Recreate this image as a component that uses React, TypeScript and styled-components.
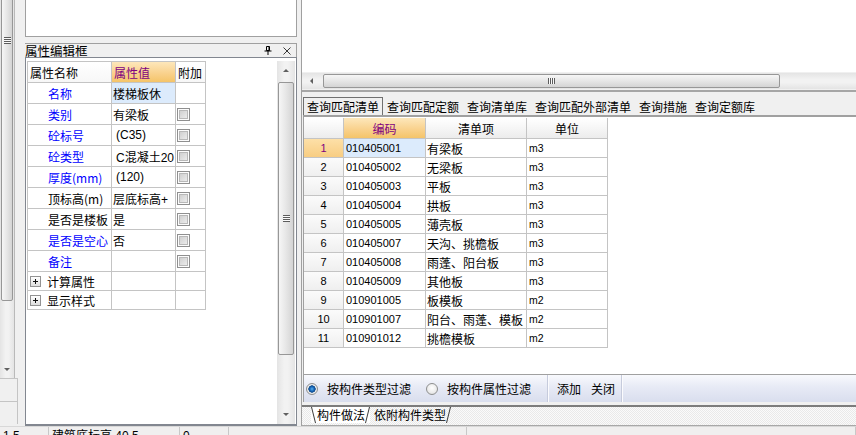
import React from 'react';
import styled, { createGlobalStyle } from 'styled-components';

const GlobalStyle = createGlobalStyle`
  html, body { margin: 0; padding: 0; background: #f0f0f0; }
  body {
    font-family: "Liberation Sans", "Noto Sans CJK SC", sans-serif;
    font-size: 12px;
    color: #000;
  }
  * { box-sizing: border-box; }
`;

const Frame = styled.div`
  width: 856px;
  height: 435px;
  overflow: hidden;
  display: flex;
  flex-direction: column;
  background: #f0f0f0;
`;

const Main = styled.div`
  height: 426px;
  flex: none;
  display: flex;
`;

/* ---------- scrollbars ---------- */

const VBar = styled.div<{ $w: number }>`
  width: ${(p) => p.$w}px;
  flex: none;
  display: flex;
  flex-direction: column;
  overflow: hidden;
  background: linear-gradient(to right, #e4e4e4, #f2f2f2 40%, #f2f2f2 60%, #e4e4e4);
`;

const StripScroll = styled(VBar)`
  height: 378px;
  border-right: 1px solid #b9b9b9;
`;

const HBar = styled.div`
  height: 16px;
  flex: none;
  display: flex;
  align-items: center;
  overflow: hidden;
  background: linear-gradient(to bottom, #e4e4e4, #f2f2f2 40%, #f2f2f2 60%, #e4e4e4);
`;

const VArrowCell = styled.div<{ $h: number }>`
  flex: none;
  height: ${(p) => p.$h}px;
  display: flex;
  align-items: center;
  justify-content: center;
`;

const HArrowCell = styled.div`
  flex: none;
  width: 19px;
  height: 16px;
  display: flex;
  align-items: center;
  justify-content: center;
`;

const Arrow = styled.span<{ $dir: 'up' | 'down' | 'left' }>`
  width: 0;
  height: 0;
  border-style: solid;
  border-color: transparent;
  ${(p) =>
    p.$dir === 'up'
      ? 'border-width: 0 3px 3px 3px; border-bottom-color: #606060;'
      : p.$dir === 'down'
      ? 'border-width: 3px 3px 0 3px; border-top-color: #606060;'
      : 'border-width: 3px 3px 3px 0; border-right-color: #606060;'}
`;

const VThumb = styled.div<{ $top: number; $h: number }>`
  flex: none;
  margin: ${(p) => p.$top}px 1px 0;
  height: ${(p) => p.$h}px;
  border: 1px solid #979797;
  border-radius: 2px;
  background: linear-gradient(to right, #f6f6f6, #e6e6e6 50%, #d4d4d4);
  display: flex;
  align-items: center;
  justify-content: center;
`;

const HThumb = styled.div<{ $w: number }>`
  flex: none;
  margin-left: 2px;
  width: ${(p) => p.$w}px;
  height: 14px;
  border: 1px solid #979797;
  border-radius: 2px;
  background: linear-gradient(to bottom, #f6f6f6, #e6e6e6 50%, #d4d4d4);
  display: flex;
  align-items: center;
  justify-content: center;
`;

const VGrip = styled.span`
  width: 7px;
  height: 7px;
  background: repeating-linear-gradient(to bottom, #5c5c5c 0 1px, #fafafa 1px 2px);
`;

const HGrip = styled.span`
  width: 7px;
  height: 6px;
  background: repeating-linear-gradient(to right, #5c5c5c 0 1px, #fafafa 1px 2px);
`;

const Track = styled.div`
  flex: 1;
`;

/* ---------- far left strip ---------- */

const Strip = styled.div`
  width: 18px;
  flex: none;
  display: flex;
  flex-direction: column;
`;

const StripBox = styled.div`
  height: 23px;
  flex: none;
  border-top: 1px solid #c4c4c4;
  border-right: 1px solid #c4c4c4;
`;

/* ---------- left property panel ---------- */

const LeftPanel = styled.div`
  width: 279px;
  flex: none;
  padding-left: 7px;
  display: flex;
  flex-direction: column;
`;

const TopBox = styled.div`
  height: 37px;
  flex: none;
  background: #fff;
  border: 1px solid #a0a0a0;
  border-top: none;
`;

const TitleBar = styled.div`
  margin-top: 6px;
  height: 14px;
  flex: none;
  display: flex;
  align-items: center;
  border-top: 1px solid #a0a0a0;
  border-right: 1px solid #a0a0a0;
  padding-right: 5px;
`;

const Title = styled.span`
  flex: 1;
  font-family: "Noto Sans CJK SC", sans-serif;
  font-size: 12.5px;
  line-height: 13px;
`;

const TitleIcons = styled.div`
  display: flex;
  align-items: center;
  gap: 11px;
`;

const Pane = styled.div`
  flex: 1;
  display: flex;
  background: #fff;
  border: 1px solid #828790;
  border-bottom-width: 2px;
  padding-top: 3px;
`;

const PropWrap = styled.div`
  flex: 1;
  padding-left: 1px;
`;

const PropGrid = styled.div`
  display: grid;
  grid-template-columns: 84px 64px 30px;
  width: 179px;
  border-top: 1px solid #c4c4c4;
  border-left: 1px solid #c4c4c4;
`;

const PCell = styled.div<{ $h: number }>`
  height: ${(p) => p.$h}px;
  display: flex;
  align-items: center;
  white-space: nowrap;
  overflow: hidden;
  border-right: 1px solid #c4c4c4;
  border-bottom: 1px solid #c4c4c4;
  font-family: "Noto Sans CJK SC", sans-serif;
  font-size: 12px;
`;

const PHead = styled(PCell)<{ $active?: boolean }>`
  padding-left: 2px;
  color: ${(p) => (p.$active ? '#800080' : '#000')};
  background: ${(p) =>
    p.$active
      ? 'linear-gradient(to bottom, #fde7bb, #f9d28e 55%, #f5c469)'
      : 'linear-gradient(to bottom, #ffffff, #f7f7f7)'};
`;

const PName = styled(PCell)<{ $blue?: boolean }>`
  padding-left: 20px;
  color: ${(p) => (p.$blue ? '#0000ff' : '#000')};
`;

const PGroup = styled(PCell)`
  padding-left: 2px;
  gap: 6px;
`;

const PValue = styled(PCell)<{ $sel?: boolean; $indent?: boolean }>`
  padding-left: ${(p) => (p.$indent ? 4 : 1)}px;
  background: ${(p) => (p.$sel ? '#dcebfc' : '#fff')};
  font-family: "Liberation Sans", "Noto Sans CJK SC", sans-serif;
`;

const PExtra = styled(PCell)`
  padding-left: 1px;
`;

const Check = styled.span`
  width: 13px;
  height: 13px;
  border: 1px solid #8f8f8f;
  background: linear-gradient(135deg, #c8c8c8, #f3f3f3);
  box-shadow: inset 0 0 0 1px #fcfcfc, inset 0 0 0 2px #b8b8b8;
`;

const PlusBox = styled.span`
  width: 11px;
  height: 11px;
  flex: none;
  border: 1px solid #939393;
  background:
    linear-gradient(#111, #111) center / 5px 1px no-repeat,
    linear-gradient(#111, #111) center / 1px 5px no-repeat,
    linear-gradient(to bottom, #ffffff, #dedede);
`;

/* ---------- splitter & right side ---------- */

const Splitter = styled.div`
  width: 4px;
  flex: none;
`;

const Right = styled.div`
  flex: 1;
  min-width: 0;
  display: flex;
  flex-direction: column;
  border-left: 1px solid #a0a0a0;
`;

const ViewBox = styled.div`
  height: 92px;
  flex: none;
  display: flex;
  flex-direction: column;
  border-bottom: 2px solid #a6a6a6;
`;

const TopView = styled.div`
  height: 72px;
  flex: none;
  background: #fff;
`;

const HBarSpaced = styled(HBar)`
  margin-top: 1px;
`;

const TabStrip = styled.div`
  height: 23px;
  flex: none;
  display: flex;
  align-items: flex-end;
  padding-left: 1px;
`;

const QueryTab = styled.span<{ $active?: boolean }>`
  height: 18px;
  padding: 0 3px;
  border: 1px solid ${(p) => (p.$active ? '#707070' : 'transparent')};
  border-bottom: none;
  font-family: "Noto Sans CJK SC", sans-serif;
  font-size: 12px;
  line-height: 17px;
  white-space: nowrap;
`;

const LowerBox = styled.div`
  margin-left: 1px;
  border-left: 1px solid #a0a0a0;
  display: flex;
  flex-direction: column;
`;

const GridArea = styled.div`
  height: 260px;
  flex: none;
  background: #fff;
  border-top: 2px solid #a0a0a0;
  border-bottom: 1px solid #a0a0a0;
  padding-top: 1px;
`;

const DataGrid = styled.div`
  display: grid;
  grid-template-columns: 40px 82px 101px 81px;
  width: 304px;
`;

const DCell = styled.div<{ $h: number }>`
  height: ${(p) => p.$h}px;
  display: flex;
  align-items: center;
  white-space: nowrap;
  overflow: hidden;
  border-right: 1px solid #c4c4c4;
  border-bottom: 1px solid #c4c4c4;
  font-family: "Noto Sans CJK SC", sans-serif;
  font-size: 12px;
`;

const DHead = styled(DCell)<{ $active?: boolean }>`
  justify-content: center;
  color: ${(p) => (p.$active ? '#800080' : '#000')};
  background: ${(p) =>
    p.$active
      ? 'linear-gradient(to bottom, #fde7bb, #f9d28e 55%, #f5c469)'
      : 'linear-gradient(to bottom, #ffffff, #f4f4f4 60%, #ececec)'};
`;

const RowNum = styled(DCell)<{ $active?: boolean }>`
  justify-content: center;
  font-family: "Liberation Sans", sans-serif;
  font-size: 11px;
  color: ${(p) => (p.$active ? '#800080' : '#000')};
  background: ${(p) =>
    p.$active
      ? 'linear-gradient(to bottom, #fde0a8, #f8cd82)'
      : 'linear-gradient(to bottom, #fbfbfb, #efefef)'};
`;

const CodeCell = styled(DCell)<{ $sel?: boolean }>`
  padding-left: 2px;
  font-family: "Liberation Sans", sans-serif;
  font-size: 11px;
  background: ${(p) => (p.$sel ? '#dcebfc' : '#fff')};
`;

const NameCell = styled(DCell)`
  padding-left: 1px;
`;

const UnitCell = styled(DCell)`
  padding-left: 2px;
  font-family: "Liberation Sans", sans-serif;
  font-size: 10.5px;
`;

/* ---------- filter toolbar ---------- */

const Toolbar = styled.div`
  height: 27px;
  flex: none;
  display: flex;
  align-items: center;
  background: linear-gradient(to bottom, #f8f9fd, #e7eaf5 45%, #d9deee);
  font-family: "Noto Sans CJK SC", sans-serif;
  font-size: 12px;
`;

const RadioItem = styled.label<{ $gap: number }>`
  display: flex;
  align-items: center;
  gap: 9px;
  margin-left: ${(p) => p.$gap}px;
  white-space: nowrap;
`;

const Radio = styled.span<{ $on?: boolean }>`
  width: 12px;
  height: 12px;
  flex: none;
  border-radius: 50%;
  border: 1px solid #8e8f8f;
  background: ${(p) =>
    p.$on
      ? 'radial-gradient(circle, #5eb3ef 0, #1a6bbd 2px, #0c4687 3.4px, #f0f0f0 3.9px, #dcdcdc 100%)'
      : 'radial-gradient(circle at 50% 40%, #ffffff 0, #ebebeb 60%, #d2d2d2 100%)'};
`;

const ToolSep = styled.span<{ $gap: number }>`
  align-self: stretch;
  width: 2px;
  flex: none;
  margin-left: ${(p) => p.$gap}px;
  border-left: 1px solid #c6cbdc;
  border-right: 1px solid #fbfbfd;
`;

const ToolBtn = styled.span<{ $gap: number }>`
  margin-left: ${(p) => p.$gap}px;
  white-space: nowrap;
`;

/* ---------- bottom tabs ---------- */

const BottomTabs = styled.div`
  margin-top: 3px;
  height: 21px;
  flex: none;
  display: flex;
  align-items: flex-start;
  padding-left: 9px;
  border-top: 2px solid #7c7c7c;
  border-bottom: 1px solid #a8a8a8;
  background: repeating-conic-gradient(#e9e9e9 0 25%, #fafafa 0 50%) 0 0 / 2px 2px;
`;

const BottomTab = styled.span<{ $active?: boolean; $left: number }>`
  position: relative;
  height: 16px;
  padding: 0 5px 0 ${(p) => p.$left}px;
  font-family: "Noto Sans CJK SC", sans-serif;
  font-size: 12px;
  line-height: 16px;
  white-space: nowrap;
  background: ${(p) => (p.$active ? '#fff' : 'transparent')};

  &::before {
    content: '';
    display: ${(p) => (p.$active ? 'block' : 'none')};
    position: absolute;
    top: 0;
    bottom: 0;
    left: 2px;
    width: 1px;
    background: #3c3c3c;
    transform: skewX(14deg);
  }

  &::after {
    content: '';
    position: absolute;
    top: 0;
    bottom: 0;
    right: 2px;
    width: 1px;
    background: #3c3c3c;
    transform: skewX(-14deg);
  }
`;

/* ---------- status bar ---------- */

const StatusBar = styled.div`
  flex: none;
  height: 20px;
  display: flex;
  border-top: 1px solid #d8d8d8;
  background: #f0efef;
`;

const StatusCell = styled.div<{ $w?: number }>`
  ${(p) => (p.$w ? `width: ${p.$w}px; flex: none;` : 'flex: 1;')}
  border-right: 1px solid #c8c8c8;
  padding: 2px 0 0 3px;
  font-family: "Liberation Sans", "Noto Sans CJK SC", sans-serif;
  font-size: 12px;
  line-height: 14px;
  white-space: nowrap;
`;

/* ---------- data ---------- */

type PropRow = {
  name: string;
  blue: boolean;
  value: string;
  indent?: boolean;
  sel?: boolean;
  check: boolean;
};

const propRows: PropRow[] = [
  { name: '名称', blue: true, value: '楼梯板休', sel: true, check: false },
  { name: '类别', blue: true, value: '有梁板', check: true },
  { name: '砼标号', blue: true, value: '(C35)', indent: true, check: true },
  { name: '砼类型', blue: true, value: 'C混凝土20', indent: true, check: true },
  { name: '厚度(mm)', blue: true, value: '(120)', indent: true, check: true },
  { name: '顶标高(m)', blue: false, value: '层底标高+', check: true },
  { name: '是否是楼板', blue: false, value: '是', check: true },
  { name: '是否是空心', blue: true, value: '否', check: true },
  { name: '备注', blue: true, value: '', check: true },
];

const groups = ['计算属性', '显示样式'];

const listRows: [string, string, string][] = [
  ['010405001', '有梁板', 'm3'],
  ['010405002', '无梁板', 'm3'],
  ['010405003', '平板', 'm3'],
  ['010405004', '拱板', 'm3'],
  ['010405005', '薄壳板', 'm3'],
  ['010405007', '天沟、挑檐板', 'm3'],
  ['010405008', '雨蓬、阳台板', 'm3'],
  ['010405009', '其他板', 'm3'],
  ['010901005', '板模板', 'm2'],
  ['010901007', '阳台、雨蓬、模板', 'm2'],
  ['010901012', '挑檐模板', 'm2'],
];

const queryTabs = ['查询匹配清单', '查询匹配定额', '查询清单库', '查询匹配外部清单', '查询措施', '查询定额库'];

const PinIcon = () => (
  <svg width="8" height="9" viewBox="0 0 8 9">
    <path d="M2.5 0.5h3v4h-3z" fill="none" stroke="#000" />
    <path d="M5 1v3.5" stroke="#000" />
    <path d="M0.5 5h7M4 5v4" stroke="#000" />
  </svg>
);

const CloseIcon = () => (
  <svg width="8" height="8" viewBox="0 0 8 8">
    <path d="M0.5 0.5l7 7M7.5 0.5l-7 7" stroke="#222" strokeWidth="0.9" />
  </svg>
);

export default function App() {
  return (
    <>
      <GlobalStyle />
      <Frame>
        <Main>
          <Strip>
            <StripScroll $w={15}>
              <VThumb $top={-220} $h={521}>
                <VGrip />
              </VThumb>
              <Track />
              <VArrowCell $h={17}>
                <Arrow $dir="down" />
              </VArrowCell>
            </StripScroll>
            <StripBox />
            <StripBox />
          </Strip>

          <LeftPanel>
            <TopBox />
            <TitleBar>
              <Title>属性编辑框</Title>
              <TitleIcons>
                <PinIcon />
                <CloseIcon />
              </TitleIcons>
            </TitleBar>
            <Pane>
              <PropWrap>
                <PropGrid>
                  <PHead $h={21}>属性名称</PHead>
                  <PHead $h={21} $active>
                    属性值
                  </PHead>
                  <PHead $h={21}>附加</PHead>
                  {propRows.map((r) => (
                    <React.Fragment key={r.name}>
                      <PName $h={21} $blue={r.blue}>
                        {r.name}
                      </PName>
                      <PValue $h={21} $sel={r.sel} $indent={r.indent}>
                        {r.value}
                      </PValue>
                      <PExtra $h={21}>{r.check && <Check />}</PExtra>
                    </React.Fragment>
                  ))}
                  {groups.map((g) => (
                    <React.Fragment key={g}>
                      <PGroup $h={19}>
                        <PlusBox />
                        {g}
                      </PGroup>
                      <PValue $h={19} />
                      <PExtra $h={19} />
                    </React.Fragment>
                  ))}
                </PropGrid>
              </PropWrap>
              <VBar $w={18} style={{ marginRight: 1 }}>
                <VArrowCell $h={19}>
                  <Arrow $dir="up" />
                </VArrowCell>
                <VThumb $top={2} $h={273}>
                  <VGrip />
                </VThumb>
                <Track />
                <VArrowCell $h={20}>
                  <Arrow $dir="down" />
                </VArrowCell>
              </VBar>
            </Pane>
          </LeftPanel>

          <Splitter />

          <Right>
            <ViewBox>
              <TopView />
              <HBarSpaced>
                <HArrowCell>
                  <Arrow $dir="left" />
                </HArrowCell>
                <HThumb $w={457}>
                  <HGrip />
                </HThumb>
              </HBarSpaced>
            </ViewBox>

            <TabStrip>
              {queryTabs.map((t, i) => (
                <QueryTab key={t} $active={i === 0}>
                  {t}
                </QueryTab>
              ))}
            </TabStrip>

            <LowerBox>
              <GridArea>
                <DataGrid>
                  <DHead $h={21} />
                  <DHead $h={21} $active>
                    编码
                  </DHead>
                  <DHead $h={21}>清单项</DHead>
                  <DHead $h={21}>单位</DHead>
                  {listRows.map(([code, name, unit], i) => (
                    <React.Fragment key={code}>
                      <RowNum $h={19} $active={i === 0}>
                        {i + 1}
                      </RowNum>
                      <CodeCell $h={19} $sel={i === 0}>
                        {code}
                      </CodeCell>
                      <NameCell $h={19}>{name}</NameCell>
                      <UnitCell $h={19}>{unit}</UnitCell>
                    </React.Fragment>
                  ))}
                </DataGrid>
              </GridArea>
              <Toolbar>
                <RadioItem $gap={2}>
                  <Radio $on />
                  按构件类型过滤
                </RadioItem>
                <RadioItem $gap={15}>
                  <Radio />
                  按构件属性过滤
                </RadioItem>
                <ToolSep $gap={16} />
                <ToolBtn $gap={8}>添加</ToolBtn>
                <ToolBtn $gap={10}>关闭</ToolBtn>
                <ToolSep $gap={6} />
              </Toolbar>
            </LowerBox>

            <BottomTabs>
              <BottomTab $active $left={6}>
                构件做法
              </BottomTab>
              <BottomTab $left={4}>依附构件类型</BottomTab>
            </BottomTabs>
          </Right>
        </Main>

        <StatusBar>
          <StatusCell $w={49}>1.5</StatusCell>
          <StatusCell $w={131}>建筑底标高 40.5</StatusCell>
          <StatusCell $w={49}>0</StatusCell>
          <StatusCell $w={238} />
          <StatusCell />
        </StatusBar>
      </Frame>
    </>
  );
}
